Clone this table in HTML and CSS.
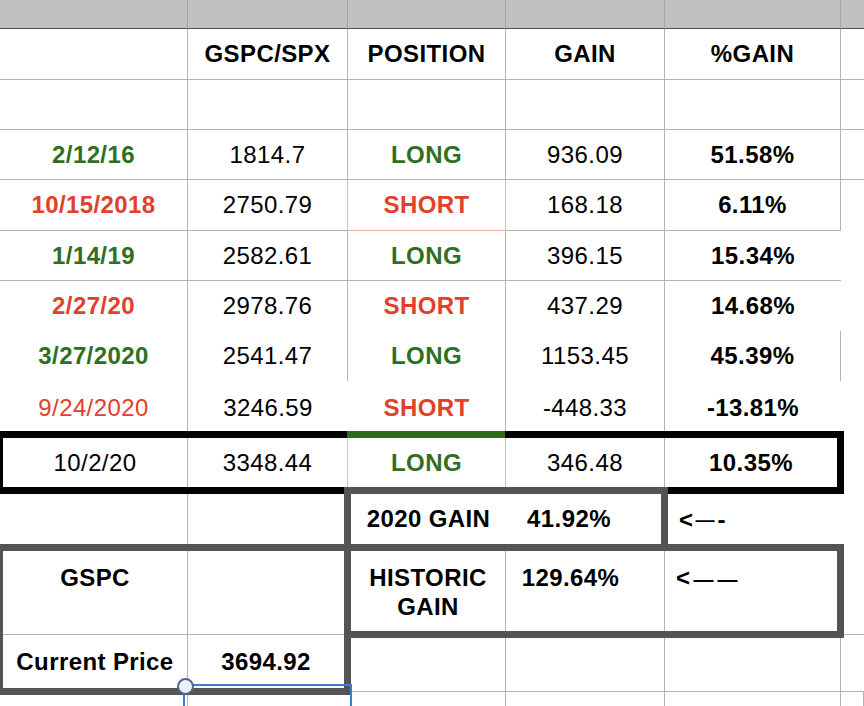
FILE: index.html
```html
<!DOCTYPE html>
<html>
<head>
<meta charset="utf-8">
<title>GSPC positions</title>
<link rel="stylesheet" href="styles.css">
</head>
<body>
<div class="sheet">
  <!-- column header strip -->
  <div class="hd"></div><div class="hd"></div><div class="hd"></div><div class="hd"></div><div class="hd"></div><div class="hd nr"></div>

  <!-- titles -->
  <div class="c"></div>
  <div class="c b">GSPC/SPX</div>
  <div class="c b">POSITION</div>
  <div class="c b">GAIN</div>
  <div class="c b">%GAIN</div>
  <div class="c nr"></div>

  <!-- blank row -->
  <div class="c"></div><div class="c"></div><div class="c"></div><div class="c"></div><div class="c"></div><div class="c nr"></div>

  <div class="c g">2/12/16</div>
  <div class="c">1814.7</div>
  <div class="c g">LONG</div>
  <div class="c">936.09</div>
  <div class="c b">51.58%</div>
  <div class="c nr"></div>

  <div class="c r">10/15/2018</div>
  <div class="c pink-r">2750.79</div>
  <div class="c r pink">SHORT</div>
  <div class="c">168.18</div>
  <div class="c b">6.11%</div>
  <div class="x"></div>

  <div class="c g">1/14/19</div>
  <div class="c">2582.61</div>
  <div class="c g">LONG</div>
  <div class="c">396.15</div>
  <div class="c b nr">15.34%</div>
  <div class="x"></div>

  <div class="c r nb">2/27/20</div>
  <div class="c nb">2978.76</div>
  <div class="c r nb">SHORT</div>
  <div class="c nb">437.29</div>
  <div class="c b nb nr">14.68%</div>
  <div class="x"></div>

  <div class="c g nb">3/27/2020</div>
  <div class="c nb">2541.47</div>
  <div class="c g nb">LONG</div>
  <div class="c nb">1153.45</div>
  <div class="c b nb">45.39%</div>
  <div class="x"></div>

  <div class="c rr nb">9/24/2020</div>
  <div class="c nb nr">3246.59</div>
  <div class="c r nb">SHORT</div>
  <div class="c nb">-448.33</div>
  <div class="c b nb nr">-13.81%</div>
  <div class="x"></div>

  <!-- highlighted current row -->
  <div class="box-black">
    <div>10/2/20</div>
    <div class="lg">3348.44</div>
    <div class="lg g">LONG</div>
    <div>346.48</div>
    <div class="b">10.35%</div>
  </div>
  <div class="green-seg"></div>
  <div class="x"></div>

  <!-- 2020 gain -->
  <div class="c nb"></div>
  <div class="c nb nr"></div>
  <div class="box-a">
    <div class="b">2020 GAIN</div>
    <div class="b shift">41.92%</div>
  </div>
  <div class="c nb nr arrow b">&lt;<span class="dash1">—</span>-</div>
  <div class="x"></div>

  <!-- GSPC box -->
  <div class="box-c">
    <div class="top b line">GSPC</div>
    <div class="tr"></div>
    <div class="bl b">Current Price</div>
    <div class="br b">3694.92</div>
  </div>

  <!-- historic gain box -->
  <div class="box-b">
    <div class="top b line sep">HISTORIC<br>GAIN</div>
    <div class="top b line sep shift">129.64%</div>
    <div class="top b line left">&lt;<span class="dash2">——</span></div>
  </div>
  <div class="x xb"></div>

  <div class="c"></div><div class="c"></div><div class="c"></div>
  <div class="x xb"></div>

  <div class="c nb"></div><div class="c nb"></div><div class="c nb"></div><div class="c nb"></div><div class="c nb"></div><div class="x"></div>

  <div class="sel"></div>
</div>
</body>
</html>
```

FILE: styles.css
```css
* {
  box-sizing: border-box;
}

html,
body {
  margin: 0;
  padding: 0;
}

body {
  width: 864px;
  height: 706px;
  overflow: hidden;
  background: #fff;
  color: #000;
  font-family: "Liberation Sans", Arial, Helvetica, sans-serif;
  font-size: 24px;
  letter-spacing: 0.4px;
}

.sheet {
  display: grid;
  grid-template-columns: 188px 160px 158px 159px 176px 23px;
  grid-template-rows: 29px 51px 50px 50px 51px 50px 50px 50px 53px 57px 57px 87px 57px 30px;
}

.hd {
  background: #c0c2c0;
  border-right: 1px solid #a6a8a6;
  border-bottom: 1px solid #4e4e4e;
}

.c {
  display: flex;
  align-items: center;
  justify-content: center;
  white-space: nowrap;
  border-right: 1px solid #b3b3b3;
  border-bottom: 1px solid #b3b3b3;
}

.nr {
  border-right: 0;
}

.nb {
  border-bottom: 0;
}

.xb {
  border-bottom: 1px solid #b3b3b3;
}

.b {
  font-weight: 700;
}

.g {
  font-weight: 700;
  color: #2e6f21;
}

.r {
  font-weight: 700;
  color: #e1402b;
}

.rr {
  color: #e1402b;
}

.pink {
  border-right-color: #ecb3aa;
  border-bottom-color: #ecb3aa;
}

.pink-r {
  border-right-color: #ecb3aa;
}

/* black outlined current row */
.box-black {
  grid-row: 10;
  grid-column: 1 / 6;
  margin: -3px -3px -3px -4px;
  border: 7px solid #000;
  background: #fff;
  z-index: 2;
  display: grid;
  grid-template-columns: 185px 160px 158px 159px 1fr;
}

.box-black > div {
  display: flex;
  align-items: center;
  justify-content: center;
  white-space: nowrap;
  border-right: 1px solid #b3b3b3;
}

.box-black > .lg {
  border-right-color: #b9d1b3;
}

.box-black > div:last-child {
  border-right: 0;
}

.green-seg {
  grid-row: 10;
  grid-column: 3;
  align-self: start;
  height: 7px;
  margin: -3px 1px 0 -1px;
  background: #2e6b1f;
  z-index: 3;
}

/* gray outlined boxes */
.box-a,
.box-b,
.box-c {
  margin: -4px -3px -3px -4px;
  border: 7px solid #545454;
  background: #fff;
  z-index: 4;
  display: grid;
}

.box-a {
  grid-row: 11;
  grid-column: 3 / 5;
  grid-template-columns: 155px 1fr;
}

.box-a > div {
  display: flex;
  align-items: center;
  justify-content: center;
  white-space: nowrap;
}

.shift {
  padding-right: 29px;
}

.arrow {
  justify-content: flex-start;
  padding-left: 14px;
}

.dash1 {
  font-size: 19px;
  margin: 0 3px 0 2px;
  letter-spacing: 0;
}

.box-b {
  grid-row: 12;
  grid-column: 3 / 6;
  grid-template-columns: 155px 159px 1fr;
}

.top {
  text-align: center;
  padding-top: 12px;
  white-space: nowrap;
}

.line {
  line-height: 29px;
}

.sep {
  border-right: 1px solid #b3b3b3;
}

.box-b > .shift {
  padding-right: 29px;
}

.left {
  text-align: left;
  padding-left: 11px;
}

.dash2 {
  font-size: 20px;
  letter-spacing: 4px;
  margin-left: 3px;
}

.box-c {
  grid-row: 12 / 14;
  grid-column: 1 / 3;
  grid-template-columns: 185px 1fr;
  grid-template-rows: 84px 1fr;
}

.box-c > .top {
  border-right: 1px solid #b3b3b3;
  border-bottom: 1px solid #b3b3b3;
}

.tr {
  border-bottom: 1px solid #b3b3b3;
}

.bl,
.br {
  display: flex;
  align-items: center;
  justify-content: center;
  white-space: nowrap;
}

.bl {
  border-right: 1px solid #b3b3b3;
}

/* selection handle */
.sel {
  grid-row: 14;
  grid-column: 2;
  margin: -8px -4px 0 -5px;
  border: 2px solid #3f7bd1;
  border-bottom: 0;
  position: relative;
  z-index: 5;
}

.sel::before {
  content: "";
  position: absolute;
  left: -8px;
  top: -8px;
  width: 13px;
  height: 13px;
  border-radius: 50%;
  background: #eef0f6;
  border: 2px solid #4e6597;
}
```
